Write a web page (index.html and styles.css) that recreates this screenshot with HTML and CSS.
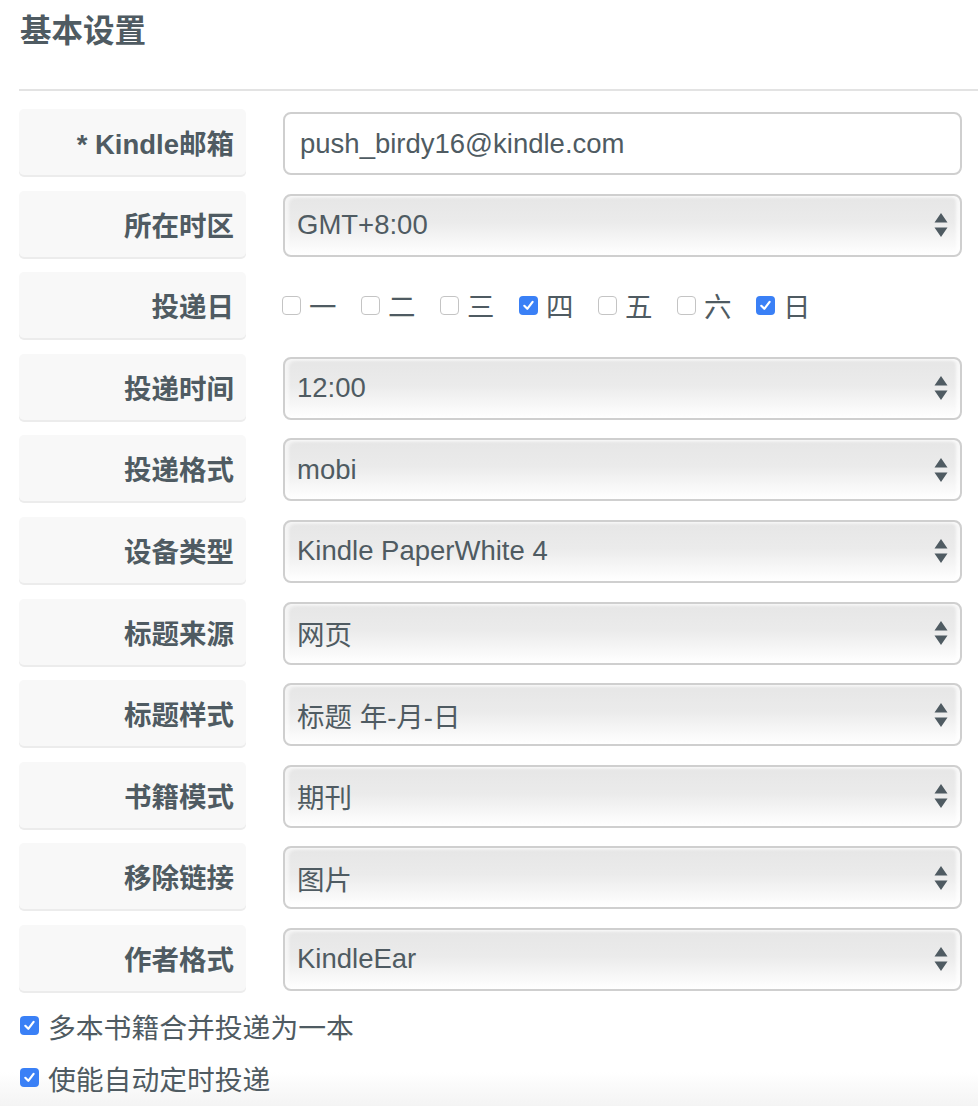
FILE: index.html
```html
<!DOCTYPE html>
<html lang="zh-CN">
<head>
<meta charset="utf-8">
<title>基本设置</title>
<link rel="stylesheet" href="styles.css">
</head>
<body>
<div class="page">
  <h2 class="title">基本设置</h2>
  <hr class="divider">
  <form class="form">
    <div class="row">
      <label class="label">* Kindle邮箱</label>
      <input class="field input" type="text" value="push_birdy16@kindle.com">
    </div>
    <div class="row">
      <label class="label">所在时区</label>
      <div class="field select"><span>GMT+8:00</span><svg class="arrows" width="14" height="24" viewBox="0 0 14 24"><path d="M7 0 L13.5 9.5 H0.5 Z M0.5 14.5 H13.5 L7 24 Z" fill="#4f5b62"/></svg></div>
    </div>
    <div class="row">
      <label class="label">投递日</label>
      <div class="days">
        <span class="day"><span class="cb"></span>一</span>
        <span class="day"><span class="cb"></span>二</span>
        <span class="day"><span class="cb"></span>三</span>
        <span class="day"><span class="cb on"><svg width="19" height="19" viewBox="0 0 19 19"><path d="M5.3 9.8 L8.3 12.8 L13.6 5.8" fill="none" stroke="#fff" stroke-width="2.2" stroke-linecap="round" stroke-linejoin="round"/></svg></span>四</span>
        <span class="day"><span class="cb"></span>五</span>
        <span class="day"><span class="cb"></span>六</span>
        <span class="day"><span class="cb on"><svg width="19" height="19" viewBox="0 0 19 19"><path d="M5.3 9.8 L8.3 12.8 L13.6 5.8" fill="none" stroke="#fff" stroke-width="2.2" stroke-linecap="round" stroke-linejoin="round"/></svg></span>日</span>
      </div>
    </div>
    <div class="row">
      <label class="label">投递时间</label>
      <div class="field select"><span>12:00</span><svg class="arrows" width="14" height="24" viewBox="0 0 14 24"><path d="M7 0 L13.5 9.5 H0.5 Z M0.5 14.5 H13.5 L7 24 Z" fill="#4f5b62"/></svg></div>
    </div>
    <div class="row">
      <label class="label">投递格式</label>
      <div class="field select"><span>mobi</span><svg class="arrows" width="14" height="24" viewBox="0 0 14 24"><path d="M7 0 L13.5 9.5 H0.5 Z M0.5 14.5 H13.5 L7 24 Z" fill="#4f5b62"/></svg></div>
    </div>
    <div class="row">
      <label class="label">设备类型</label>
      <div class="field select"><span>Kindle PaperWhite 4</span><svg class="arrows" width="14" height="24" viewBox="0 0 14 24"><path d="M7 0 L13.5 9.5 H0.5 Z M0.5 14.5 H13.5 L7 24 Z" fill="#4f5b62"/></svg></div>
    </div>
    <div class="row">
      <label class="label">标题来源</label>
      <div class="field select"><span>网页</span><svg class="arrows" width="14" height="24" viewBox="0 0 14 24"><path d="M7 0 L13.5 9.5 H0.5 Z M0.5 14.5 H13.5 L7 24 Z" fill="#4f5b62"/></svg></div>
    </div>
    <div class="row">
      <label class="label">标题样式</label>
      <div class="field select"><span>标题 年-月-日</span><svg class="arrows" width="14" height="24" viewBox="0 0 14 24"><path d="M7 0 L13.5 9.5 H0.5 Z M0.5 14.5 H13.5 L7 24 Z" fill="#4f5b62"/></svg></div>
    </div>
    <div class="row">
      <label class="label">书籍模式</label>
      <div class="field select"><span>期刊</span><svg class="arrows" width="14" height="24" viewBox="0 0 14 24"><path d="M7 0 L13.5 9.5 H0.5 Z M0.5 14.5 H13.5 L7 24 Z" fill="#4f5b62"/></svg></div>
    </div>
    <div class="row">
      <label class="label">移除链接</label>
      <div class="field select"><span>图片</span><svg class="arrows" width="14" height="24" viewBox="0 0 14 24"><path d="M7 0 L13.5 9.5 H0.5 Z M0.5 14.5 H13.5 L7 24 Z" fill="#4f5b62"/></svg></div>
    </div>
    <div class="row">
      <label class="label">作者格式</label>
      <div class="field select"><span>KindleEar</span><svg class="arrows" width="14" height="24" viewBox="0 0 14 24"><path d="M7 0 L13.5 9.5 H0.5 Z M0.5 14.5 H13.5 L7 24 Z" fill="#4f5b62"/></svg></div>
    </div>
  </form>
  <div class="options">
    <div class="option"><span class="cb on"><svg width="19" height="19" viewBox="0 0 19 19"><path d="M5.3 9.8 L8.3 12.8 L13.6 5.8" fill="none" stroke="#fff" stroke-width="2.2" stroke-linecap="round" stroke-linejoin="round"/></svg></span>多本书籍合并投递为一本</div>
    <div class="option"><span class="cb on"><svg width="19" height="19" viewBox="0 0 19 19"><path d="M5.3 9.8 L8.3 12.8 L13.6 5.8" fill="none" stroke="#fff" stroke-width="2.2" stroke-linecap="round" stroke-linejoin="round"/></svg></span>使能自动定时投递</div>
  </div>
</div>
</body>
</html>
```

FILE: styles.css
```css
html {
  height: 100%;
  background: linear-gradient(to bottom, #ffffff calc(100% - 34px), #f4f4f4 100%);
}
body {
  margin: 0;
  font-family: "Liberation Sans", "Noto Sans CJK SC", sans-serif;
  color: #4f5b62;
}
.page {
  padding-left: 19px;
}
.title {
  margin: 13px 0 0 1px;
  font-size: 31.5px;
  line-height: 36px;
  font-weight: bold;
  color: #4f5b62;
}
.divider {
  margin: 40px 0 0 0;
  border: 0;
  border-top: 2px solid #e3e3e3;
}
.form {
  display: flex;
  flex-direction: column;
  gap: 15.6px;
  margin-top: 18px;
}
.row {
  display: flex;
  align-items: flex-end;
  height: 66px;
}
.label {
  box-sizing: border-box;
  width: 227px;
  height: 66px;
  flex: none;
  display: flex;
  align-items: center;
  justify-content: flex-end;
  padding-right: 12px;
  background: #f8f8f8;
  border-radius: 5px;
  box-shadow: 0 2px 0 #ececec;
  font-size: 27.5px;
  font-weight: bold;
  color: #4f5b62;
}
.field {
  box-sizing: border-box;
  width: 679px;
  height: 63px;
  margin-left: 37px;
  border: 2px solid #cfcfcf;
  border-radius: 8px;
  font-family: "Liberation Sans", "Noto Sans CJK SC", sans-serif;
  font-size: 27.5px;
  color: #4f5b62;
}
.input {
  padding: 0 0 0 15px;
  background: #fff;
  outline: none;
}
.select {
  display: flex;
  align-items: center;
  justify-content: space-between;
  padding: 0 12px 0 12px;
  background: linear-gradient(to bottom, #e6e6e6 0%, #ebebeb 45%, #f6f6f6 75%, #ffffff 100%);
  box-shadow: inset 4px 2px 3px rgba(255,255,255,0.55), inset -4px 0 3px rgba(255,255,255,0.7);
}
.arrows {
  flex: none;
}
.days {
  display: flex;
  align-items: center;
  height: 66px;
  margin-left: 36px;
}
.day {
  display: flex;
  align-items: center;
  width: 79px;
  font-size: 27.5px;
}
.cb {
  box-sizing: border-box;
  width: 19px;
  height: 19px;
  flex: none;
  margin-right: 8px;
  border: 1px solid #c4c4c4;
  border-radius: 4px;
  background: #fff;
  display: flex;
}
.cb.on {
  border: 0;
  background: #3a80f6;
}
.options {
  margin-top: 17px;
  display: flex;
  flex-direction: column;
  gap: 16px;
}
.option {
  display: flex;
  align-items: center;
  height: 36px;
  margin-left: 1px;
  font-size: 27.8px;
}
.option .cb {
  margin-right: 9px;
}
```
